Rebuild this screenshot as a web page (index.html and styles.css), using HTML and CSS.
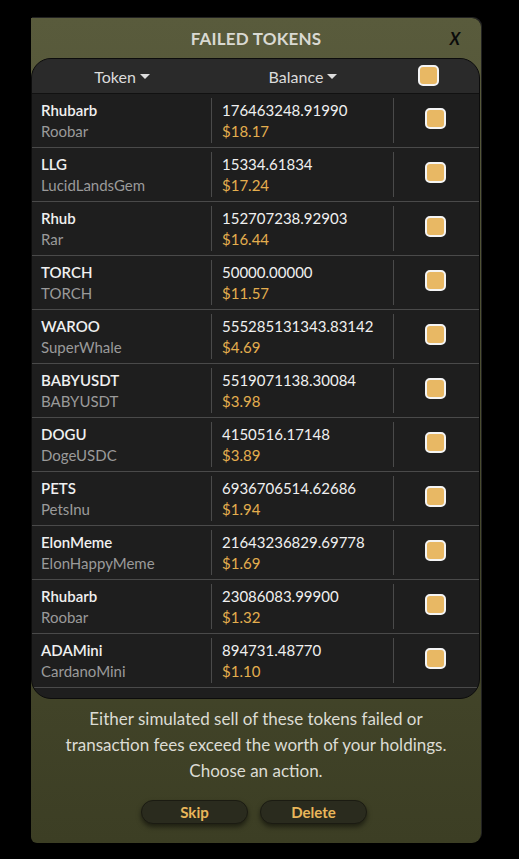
FILE: index.html
```html
<!DOCTYPE html>
<html>
<head>
<meta charset="utf-8">
<link rel="stylesheet" href="styles.css">
</head>
<body>
<div class="modal">
  <div class="title-bar">
    <span class="title">FAILED TOKENS</span>
    <span class="close">X</span>
  </div>
  <div class="table">
    <div class="thead">
      <div class="th">Token <span class="caret"></span></div>
      <div class="th">Balance <span class="caret"></span></div>
      <div class="th th-check"><span class="cb"></span></div>
    </div>
    <div class="tbody">
      <div class="row"><div class="cell name"><div class="n">Rhubarb</div><div class="s">Roobar</div></div><div class="cell bal"><div class="n">176463248.91990</div><div class="u">$18.17</div></div><div class="cell chk"><span class="cb"></span></div></div>
      <div class="row"><div class="cell name"><div class="n">LLG</div><div class="s">LucidLandsGem</div></div><div class="cell bal"><div class="n">15334.61834</div><div class="u">$17.24</div></div><div class="cell chk"><span class="cb"></span></div></div>
      <div class="row"><div class="cell name"><div class="n">Rhub</div><div class="s">Rar</div></div><div class="cell bal"><div class="n">152707238.92903</div><div class="u">$16.44</div></div><div class="cell chk"><span class="cb"></span></div></div>
      <div class="row"><div class="cell name"><div class="n">TORCH</div><div class="s">TORCH</div></div><div class="cell bal"><div class="n">50000.00000</div><div class="u">$11.57</div></div><div class="cell chk"><span class="cb"></span></div></div>
      <div class="row"><div class="cell name"><div class="n">WAROO</div><div class="s">SuperWhale</div></div><div class="cell bal"><div class="n">555285131343.83142</div><div class="u">$4.69</div></div><div class="cell chk"><span class="cb"></span></div></div>
      <div class="row"><div class="cell name"><div class="n">BABYUSDT</div><div class="s">BABYUSDT</div></div><div class="cell bal"><div class="n">5519071138.30084</div><div class="u">$3.98</div></div><div class="cell chk"><span class="cb"></span></div></div>
      <div class="row"><div class="cell name"><div class="n">DOGU</div><div class="s">DogeUSDC</div></div><div class="cell bal"><div class="n">4150516.17148</div><div class="u">$3.89</div></div><div class="cell chk"><span class="cb"></span></div></div>
      <div class="row"><div class="cell name"><div class="n">PETS</div><div class="s">PetsInu</div></div><div class="cell bal"><div class="n">6936706514.62686</div><div class="u">$1.94</div></div><div class="cell chk"><span class="cb"></span></div></div>
      <div class="row"><div class="cell name"><div class="n">ElonMeme</div><div class="s">ElonHappyMeme</div></div><div class="cell bal"><div class="n">21643236829.69778</div><div class="u">$1.69</div></div><div class="cell chk"><span class="cb"></span></div></div>
      <div class="row"><div class="cell name"><div class="n">Rhubarb</div><div class="s">Roobar</div></div><div class="cell bal"><div class="n">23086083.99900</div><div class="u">$1.32</div></div><div class="cell chk"><span class="cb"></span></div></div>
      <div class="row"><div class="cell name"><div class="n">ADAMini</div><div class="s">CardanoMini</div></div><div class="cell bal"><div class="n">894731.48770</div><div class="u">$1.10</div></div><div class="cell chk"><span class="cb"></span></div></div>
    </div>
  </div>
  <p class="message">Either simulated sell of these tokens failed or<br>transaction fees exceed the worth of your holdings.<br>Choose an action.</p>
  <div class="actions">
    <button class="btn">Skip</button>
    <button class="btn">Delete</button>
  </div>
</div>
</body>
</html>
```
FILE: styles.css
```css
html, body {
  margin: 0;
  padding: 0;
  background: #000;
}
body {
  font-family: "Lato", "Noto Sans", sans-serif;
  width: 519px;
  height: 859px;
  overflow: hidden;
}
.modal {
  margin: 18px 0 0 31px;
  width: 450px;
  height: 825px;
  box-sizing: border-box;
  background: linear-gradient(#595b3c, #3c3e24);
  border-radius: 0 9px 9px 6px;
  box-shadow: 1px -1px 0 #222;
  display: flex;
  flex-direction: column;
}
.title-bar {
  height: 40px;
  display: flex;
  align-items: center;
  justify-content: center;
  position: relative;
}
.title {
  color: #d9d9d2;
  font-weight: 700;
  font-size: 17px;
  letter-spacing: 0.2px;
}
.close {
  position: absolute;
  right: 20px;
  top: 9px;
  color: #0a0a0a;
  font-size: 18px;
  font-weight: 700;
  transform: skewX(-8deg) scaleX(0.85);
}
.table {
  height: 641px;
  box-sizing: border-box;
  width: 449px;
  background: #1e1e1e;
  border: 1px solid #0c0c0c;
  border-radius: 20px;
  overflow: hidden;
}
.thead {
  height: 34px;
  background: #2a2a2a;
  border-bottom: 1px solid #111;
  display: grid;
  grid-template-columns: 180px 182px 1fr;
  align-items: center;
}
.th {
  color: #dcdcdc;
  font-size: 16px;
  display: flex;
  align-items: center;
  justify-content: center;
  gap: 4px;
}
.th-check {
  justify-content: flex-start;
  padding-left: 24px;
  margin-top: -2px;
}
.caret {
  width: 0;
  height: 0;
  border-left: 5px solid transparent;
  border-right: 5px solid transparent;
  border-top: 5px solid #ddd;
  margin-top: 1px;
}
.row {
  height: 54px;
  box-sizing: border-box;
  border-bottom: 1px solid #4a4a4a;
  display: grid;
  grid-template-columns: 180px 182px 1fr;
}
.cell {
  display: flex;
  flex-direction: column;
  justify-content: center;
  margin: 4px 0;
}
.name {
  padding-left: 9px;
  border-right: 1px solid #4a4a4a;
}
.bal {
  padding-left: 10px;
  border-right: 1px solid #4a4a4a;
}
.n {
  color: #f0f0f0;
  font-size: 15px;
  line-height: 21px;
}
.name .n {
  font-weight: 600;
}
.s {
  color: #9a9a9a;
  font-size: 15px;
  line-height: 21px;
}
.u {
  color: #e4ae4e;
  font-size: 15px;
  line-height: 21px;
}
.chk {
  align-items: flex-start;
  padding-left: 31px;
  padding-bottom: 4px;
}
.cb {
  display: inline-block;
  width: 17px;
  height: 17px;
  border: 2px solid #f4f4f4;
  border-radius: 5px;
  background: #e8b864;
}
.message {
  margin: 7px 0 0;
  text-align: center;
  color: #dcdcd4;
  font-size: 17px;
  line-height: 26px;
}
.actions {
  display: flex;
  justify-content: center;
  gap: 12px;
  margin-top: 16px;
  padding-right: 4px;
}
.btn {
  width: 107px;
  height: 24px;
  border-radius: 12px;
  background: #2a2b1e;
  border: 1px solid #1b1b12;
  box-shadow: 0 3px 5px rgba(0, 0, 0, 0.5);
  color: #e9b65a;
  font-family: "Lato", "Noto Sans", sans-serif;
  font-weight: 700;
  font-size: 15px;
  padding: 0;
}
```
